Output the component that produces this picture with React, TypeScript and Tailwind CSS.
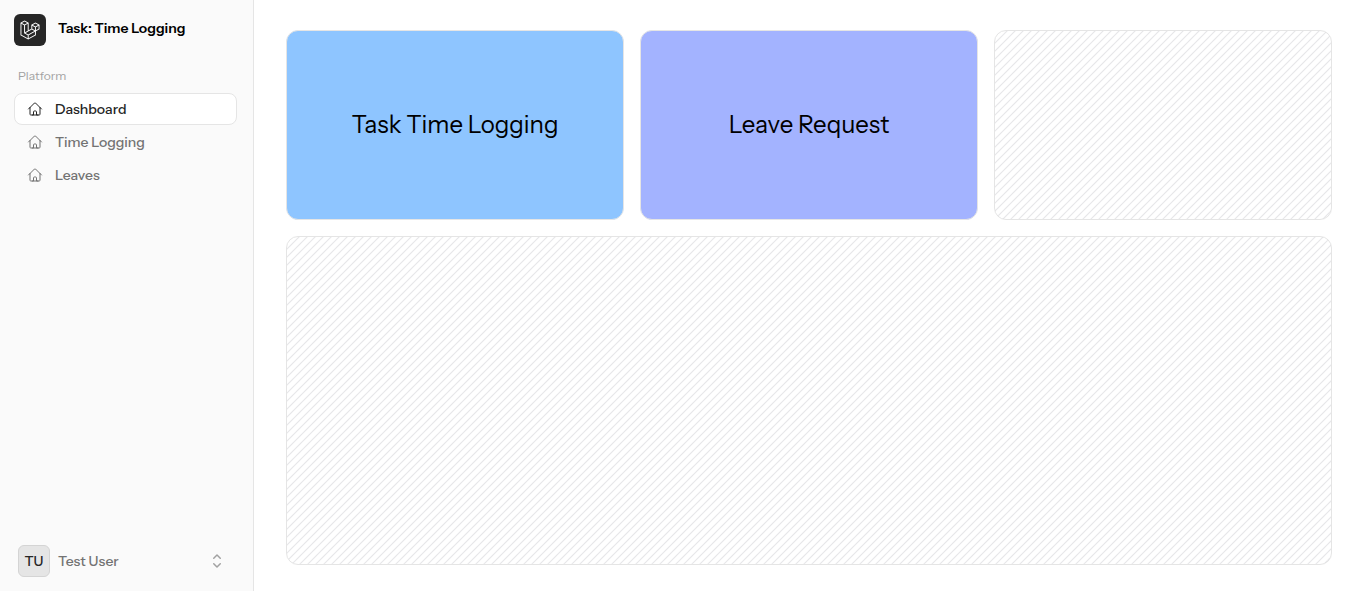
import { useId } from "react";

function LaravelMark() {
  return (
    <svg viewBox="0 0 40 42" className="size-5 fill-white" aria-hidden="true">
      <path
        fillRule="evenodd"
        clipRule="evenodd"
        d="M17.2 5.633 8.6.855 0 5.633v26.51l16.2 9 16.2-9v-8.442l7.6-4.223V9.856l-8.6-4.777-8.6 4.777V18.3l-5.6 3.111V5.633ZM38 18.301l-5.6 3.11v-6.157l5.6-3.11V18.3Zm-1.06-7.856-5.54 3.078-5.54-3.079 5.54-3.078 5.54 3.079ZM24.8 18.3v-6.157l5.6 3.111v6.158L24.8 18.3Zm-1 1.732 5.54 3.078-13.14 7.302-5.54-3.078 13.14-7.3v-.002Zm-16.2 7.89 7.6 4.222V38.3L2 30.966V7.92l5.6 3.111v16.892ZM8.6 9.3 3.06 6.222 8.6 3.143l5.54 3.08L8.6 9.3Zm21.8 15.51-13.2 7.334V38.3l13.2-7.334v-6.156ZM9.6 11.034l5.6-3.11v14.6l-5.6 3.11v-14.6Z"
      />
    </svg>
  );
}

function HomeIcon() {
  return (
    <svg viewBox="0 0 24 24" fill="none" stroke="currentColor" strokeWidth="1.5" strokeLinecap="round" strokeLinejoin="round" className="size-4 shrink-0" aria-hidden="true">
      <path d="m2.25 12 8.954-8.955c.44-.439 1.152-.439 1.591 0L21.75 12M4.5 9.75v10.125c0 .621.504 1.125 1.125 1.125H9.75v-4.875c0-.621.504-1.125 1.125-1.125h2.25c.621 0 1.125.504 1.125 1.125V21h4.125c.621 0 1.125-.504 1.125-1.125V9.75M8.25 21h8.25" />
    </svg>
  );
}

function ChevronsIcon() {
  return (
    <svg viewBox="0 0 20 20" fill="currentColor" className="size-5 shrink-0 text-neutral-400" aria-hidden="true">
      <path d="M10.53 3.47a.75.75 0 0 0-1.06 0L6.22 6.72a.75.75 0 0 0 1.06 1.06L10 5.06l2.72 2.72a.75.75 0 1 0 1.06-1.06l-3.25-3.25Zm-4.31 9.81 3.25 3.25a.75.75 0 0 0 1.06 0l3.25-3.25a.75.75 0 1 0-1.06-1.06L10 14.94l-2.72-2.72a.75.75 0 0 0-1.06 1.06Z" />
    </svg>
  );
}

function Placeholder({ className }: { className: string }) {
  const id = useId();
  return (
    <div className={`relative overflow-hidden rounded-xl border border-neutral-200 ${className}`}>
      <svg className="absolute inset-0 size-full stroke-gray-900/10" fill="none" aria-hidden="true">
        <defs>
          <pattern id={id} x="0" y="0" width="8" height="8" patternUnits="userSpaceOnUse">
            <path d="M-2 6L6 -2M2 10L10 2" strokeWidth="1.2" />
          </pattern>
        </defs>
        <rect stroke="none" fill={`url(#${id})`} width="100%" height="100%" />
      </svg>
    </div>
  );
}

const links = [
  { label: "Dashboard", active: true },
  { label: "Time Logging", active: false },
  { label: "Leaves", active: false },
];

const cards = [
  { label: "Task Time Logging", color: "bg-blue-300" },
  { label: "Leave Request", color: "bg-indigo-300" },
];

export default function App() {
  return (
    <div className="flex min-h-screen bg-white font-['Instrument_Sans','Liberation_Sans',sans-serif] text-black">
      <aside className="flex w-[254px] shrink-0 flex-col border-r border-neutral-200 bg-neutral-50 py-3.5 pr-4 pl-3.5">
        <a href="#" className="flex gap-3">
          <span className="flex size-8 items-center justify-center rounded-md bg-neutral-800">
            <LaravelMark />
          </span>
          <span className="pt-1 text-sm font-semibold">Task: Time Logging</span>
        </a>

        <nav className="mt-5 flex flex-col" aria-labelledby="platform">
          <h2 id="platform" className="px-1 pb-[7px] text-xs leading-5 text-neutral-400">
            Platform
          </h2>
          <div className="flex flex-col gap-px">
            {links.map((link) => (
              <a
                key={link.label}
                href="#"
                aria-current={link.active ? "page" : undefined}
                className={`flex h-8 items-center gap-3 rounded-lg border px-3 text-sm font-medium ${
                  link.active ? "border-neutral-200 bg-white text-neutral-800" : "border-transparent text-neutral-500"
                }`}
              >
                <HomeIcon />
                {link.label}
              </a>
            ))}
          </div>
        </nav>

        <button type="button" className="mt-auto flex items-center px-1 text-sm font-medium text-neutral-500">
          <span className="flex size-8 items-center justify-center rounded-md border border-neutral-300 bg-neutral-200 text-neutral-800">TU</span>
          <span className="ml-2">Test User</span>
          <span className="mr-1.5 ml-auto">
            <ChevronsIcon />
          </span>
        </button>
      </aside>

      <main className="flex min-w-0 flex-1 flex-col gap-4 pt-[30px] pr-[25px] pb-[26px] pl-8">
        <div className="grid grid-cols-3 gap-4">
          {cards.map((card) => (
            <a
              key={card.label}
              href="#"
              className={`flex aspect-video items-center justify-center rounded-xl border border-neutral-200 text-2xl ${card.color}`}
            >
              {card.label}
            </a>
          ))}
          <Placeholder className="aspect-video" />
        </div>
        <Placeholder className="flex-1" />
      </main>
    </div>
  );
}
